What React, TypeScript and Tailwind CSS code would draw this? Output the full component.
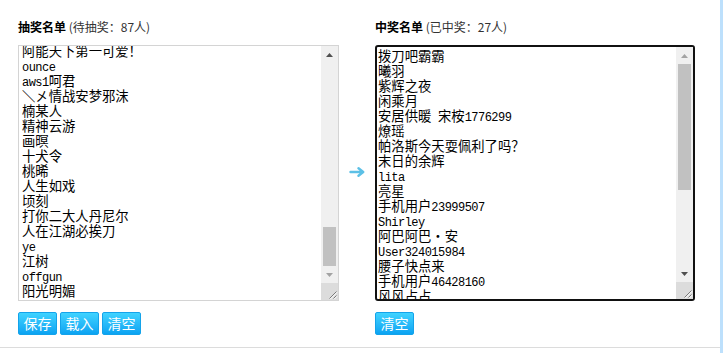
import React from "react";

const pendingTail = [
  "阿能天下第一可爱！", "ounce", "aws1呵君", "＼㐅情战安梦邪沫", "楠某人", "精神云游",
  "画暝", "十犬令", "桃晞", "人生如戏", "顷刻", "打你二大人丹尼尔", "人在江湖必挨刀",
  "ye", "江树", "offgun", "阳光明媚",
];

const winnerNames = [
  "拨刀吧霸霸", "曦羽", "紫辉之夜", "闲乘月", "安居供暖 宋桉1776299", "燎瑶",
  "帕洛斯今天耍佩利了吗？", "末日的余辉", "lita", "亮星", "手机用户23999507", "Shirley",
  "阿巴阿巴・安", "User324015984", "腰子快点来", "手机用户46428160", "风风占占",
];

// ascii runs get a half-width mono font so they line up like the old song-ti textarea
function Line({ text }: { text: string }) {
  const parts = text.split(/([\x20-\x7e]+)/);
  return (
    <div className="h-[15px] whitespace-pre leading-[15px]">
      {parts.map((p, i) =>
        /^[\x20-\x7e]+$/.test(p) ? (
          <span key={i} className="font-['Liberation_Mono',monospace] text-[12px] tracking-[-0.53px]">
            {p}
          </span>
        ) : (
          <span key={i}>{p}</span>
        )
      )}
    </div>
  );
}

function Arrow({ up, dim }: { up?: boolean; dim?: boolean }) {
  return (
    <div className="flex h-[17px] items-center justify-center">
      <svg width="7" height="4" viewBox="0 0 7 4">
        <polygon points={up ? "0,4 7,4 3.5,0" : "0,0 7,0 3.5,4"} fill={dim ? "#a3a3a3" : "#505050"} />
      </svg>
    </div>
  );
}

interface ListBoxProps {
  lines: string[];
  bottom?: boolean;
  thumbTop: number;
  thumbHeight: number;
  upDim?: boolean;
  downDim?: boolean;
  focused?: boolean;
}

function ListBox({ lines, bottom, thumbTop, thumbHeight, upDim, downDim, focused }: ListBoxProps) {
  return (
    <div
      className={
        focused
          ? "mt-[10px] flex h-[256px] w-[320px] rounded-[3px] border-2 border-[#111] bg-white"
          : "mt-[10px] flex h-[256px] w-[321px] border border-[#d4d4d4] bg-white"
      }
    >
      <div
        className={
          bottom
            ? "flex min-w-0 flex-1 flex-col justify-end overflow-hidden pb-[2px] pl-[3px] text-[13.333px] text-black font-['Noto_Sans_CJK_SC',sans-serif]"
            : "flex min-w-0 flex-1 flex-col overflow-hidden pt-[1px] pl-[1px] text-[13.333px] text-black font-['Noto_Sans_CJK_SC',sans-serif]"
        }
      >
        {lines.map((l, i) => (
          <Line key={i} text={l} />
        ))}
      </div>
      <div className="flex w-[17px] flex-col bg-[#f0f0f0]">
        <Arrow up dim={upDim} />
        <div className="flex-1 px-[2px]">
          <div className="w-full bg-[#c1c1c1]" style={{ marginTop: thumbTop, height: thumbHeight }} />
        </div>
        <Arrow dim={downDim} />
        <div className="h-[17px] bg-[#dcdcdc]">
          <svg width="17" height="17" viewBox="0 0 17 17">
            <path d="M15.5 8.5 L8.5 15.5 M15.5 12.5 L12.5 15.5" stroke="#7a7a7a" strokeWidth="1" />
            <path d="M16.2 9.2 L9.2 16.2 M16.2 13.2 L13.2 16.2" stroke="#ffffff" strokeWidth="1" />
          </svg>
        </div>
      </div>
    </div>
  );
}

function BlueButton({ label }: { label: string }) {
  return (
    <button className="h-[23px] w-[39px] rounded-[2px] border border-[#14a3ea] bg-gradient-to-b from-[#3fd3ff] to-[#0aa3f2] text-[14px] leading-[21px] text-white font-['Noto_Sans_CJK_SC',sans-serif]">
      {label}
    </button>
  );
}

export default function App() {
  return (
    <div className="h-[353px] w-[723px] border-r-[3px] border-[#bde0fc] bg-white font-['Noto_Sans_CJK_SC',sans-serif]">
      <div className="h-[348px] border-b border-[#dcdcdc] pl-[18px] pt-[19px]">
        <div className="flex">
          <div className="w-[321px]">
            <div className="h-[16px] text-[12px] leading-[16px] text-[#333]">
              <span className="font-bold text-black">抽奖名单</span> (待抽奖：87人)
            </div>
            <ListBox lines={pendingTail} bottom thumbTop={164} thumbHeight={39} downDim />
            <div className="mt-[11px] flex gap-[3px]">
              <BlueButton label="保存" />
              <BlueButton label="载入" />
              <BlueButton label="清空" />
            </div>
          </div>

          <div className="flex w-[36px] items-center justify-center pt-[26px] pb-[34px]">
            <svg width="17" height="10" viewBox="0 0 17 10" className="mb-[2px]">
              <path
                d="M1.5 5 H14 M9.5 1.3 L14.2 5 L9.5 8.7"
                fill="none"
                stroke="#5cc0e6"
                strokeWidth="2.4"
                strokeLinecap="round"
                strokeLinejoin="round"
              />
            </svg>
          </div>

          <div className="w-[320px]">
            <div className="h-[16px] text-[12px] leading-[16px] text-[#333]">
              <span className="font-bold text-black">中奖名单</span> (已中奖：27人)
            </div>
            <ListBox lines={winnerNames} thumbTop={0} thumbHeight={126} upDim focused />
            <div className="mt-[11px] flex">
              <BlueButton label="清空" />
            </div>
          </div>
        </div>
      </div>
    </div>
  );
}
